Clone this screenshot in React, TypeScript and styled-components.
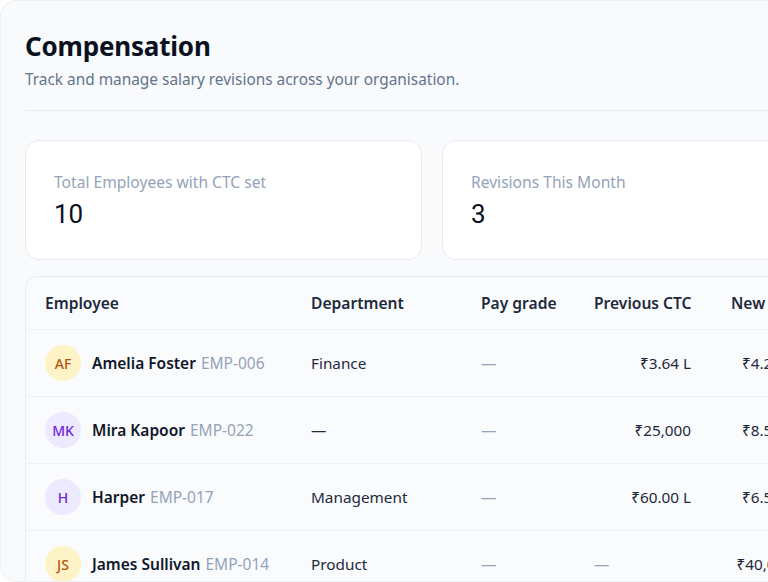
import React from "react";
import styled, { createGlobalStyle } from "styled-components";

const Global = createGlobalStyle`
  html, body { margin: 0; padding: 0; background: #ffffff; }
  body { font-family: "Noto Sans", "Open Sans", sans-serif; color: #0f172a; overflow: hidden; }
  * { box-sizing: border-box; }
`;

const Frame = styled.div`
  width: 900px;
  height: 582px;
  background: #f8fafc;
  border: 1px solid #eef1f5;
  border-right: none;
  border-radius: 16px 0 0 16px;
  padding: 28px 0 0 24px;
  overflow: hidden;
`;

const Header = styled.header`
  display: flex;
  flex-direction: column;
  gap: 7px;
  padding-bottom: 20px;
  border-bottom: 1px solid #e9edf3;
`;

const Title = styled.h1`
  margin: 0;
  font-size: 26px;
  line-height: 34px;
  font-weight: 700;
  color: #0b1120;
  letter-spacing: -0.2px;
`;

const Subtitle = styled.p`
  margin: 0;
  font-size: 15.4px;
  line-height: 20px;
  color: #64748b;
`;

const Stats = styled.div`
  display: grid;
  grid-template-columns: 397px 397px;
  gap: 20px;
  margin-top: 29px;
`;

const StatCard = styled.div`
  background: #ffffff;
  border: 1px solid #e6eaf0;
  border-radius: 14px;
  height: 120px;
  padding: 31px 28px 0;
  display: flex;
  flex-direction: column;
  gap: 6px;
`;

const StatLabel = styled.div`
  font-size: 15.6px;
  line-height: 20px;
  color: #94a3b8;
`;

const StatValue = styled.div`
  font-family: "Roboto", "Noto Sans", sans-serif;
  font-size: 26px;
  line-height: 32px;
  color: #0b1120;
`;

const TableCard = styled.div`
  margin-top: 16px;
  background: #fafbfd;
  border: 1px solid #e9edf2;
  border-right: none;
  border-radius: 12px 0 0 12px;
  width: 900px;
`;

const Row = styled.div<{ $head?: boolean }>`
  display: grid;
  grid-template-columns: 266px 170px 113px 137px 102px;
  margin-left: -1px;
  height: ${(p) => (p.$head ? "53px" : "67px")};
  align-items: center;
  border-bottom: 1px solid #edf0f5;
`;

const HeadCell = styled.div<{ $right?: boolean }>`
  padding: 0 20px;
  font-size: 15.6px;
  font-weight: 600;
  color: #1e293b;
  text-align: ${(p) => (p.$right ? "right" : "left")};
  white-space: nowrap;
`;

const Cell = styled.div<{ $right?: boolean; $muted?: boolean }>`
  padding: 0 20px;
  font-size: 15.3px;
  color: ${(p) => (p.$muted ? "#94a3b8" : "#1e293b")};
  text-align: ${(p) => (p.$right ? "right" : "left")};
  white-space: nowrap;
`;

const EmpCell = styled.div`
  padding: 0 20px;
  display: flex;
  align-items: center;
  gap: 11px;
  white-space: nowrap;
`;

const Avatar = styled.div<{ $bg: string; $fg: string }>`
  width: 36px;
  height: 36px;
  border-radius: 50%;
  background: ${(p) => p.$bg};
  color: ${(p) => p.$fg};
  display: flex;
  align-items: center;
  justify-content: center;
  font-size: 14px;
  font-weight: 500;
  flex-shrink: 0;
`;

const Name = styled.span`
  font-size: 15.5px;
  font-weight: 600;
  color: #0f172a;
`;

const EmpId = styled.span`
  font-size: 15.5px;
  color: #94a3b8;
  margin-left: 5px;
`;

type Emp = {
  initials: string;
  name: string;
  id: string;
  dept: string | null;
  prev: string | null;
  next: string;
  tone: "amber" | "violet";
};

const tones = {
  amber: { bg: "#fef3c7", fg: "#b45309" },
  violet: { bg: "#ede9fe", fg: "#6d28d9" },
};

const rows: Emp[] = [
  { initials: "AF", name: "Amelia Foster", id: "EMP-006", dept: "Finance", prev: "₹3.64 L", next: "₹4.20 L", tone: "amber" },
  { initials: "MK", name: "Mira Kapoor", id: "EMP-022", dept: null, prev: "₹25,000", next: "₹8.50 L", tone: "violet" },
  { initials: "H", name: "Harper", id: "EMP-017", dept: "Management", prev: "₹60.00 L", next: "₹6.50 L", tone: "violet" },
  { initials: "JS", name: "James Sullivan", id: "EMP-014", dept: "Product", prev: null, next: "₹40,000", tone: "amber" },
];

export default function App() {
  return (
    <>
      <Global />
      <Frame>
        <Header>
          <Title>Compensation</Title>
          <Subtitle>Track and manage salary revisions across your organisation.</Subtitle>
        </Header>
        <Stats>
          <StatCard>
            <StatLabel>Total Employees with CTC set</StatLabel>
            <StatValue>10</StatValue>
          </StatCard>
          <StatCard>
            <StatLabel>Revisions This Month</StatLabel>
            <StatValue>3</StatValue>
          </StatCard>
        </Stats>
        <TableCard>
          <Row $head>
            <HeadCell>Employee</HeadCell>
            <HeadCell>Department</HeadCell>
            <HeadCell>Pay grade</HeadCell>
            <HeadCell $right>Previous CTC</HeadCell>
            <HeadCell>New CTC</HeadCell>
          </Row>
          {rows.map((r) => (
            <Row key={r.id}>
              <EmpCell>
                <Avatar $bg={tones[r.tone].bg} $fg={tones[r.tone].fg}>{r.initials}</Avatar>
                <span>
                  <Name>{r.name}</Name>
                  <EmpId>{r.id}</EmpId>
                </span>
              </EmpCell>
              <Cell>{r.dept ?? "—"}</Cell>
              <Cell $muted>—</Cell>
              {r.prev ? <Cell $right>{r.prev}</Cell> : <Cell $muted>—</Cell>}
              <Cell $right>{r.next}</Cell>
            </Row>
          ))}
        </TableCard>
      </Frame>
    </>
  );
}
